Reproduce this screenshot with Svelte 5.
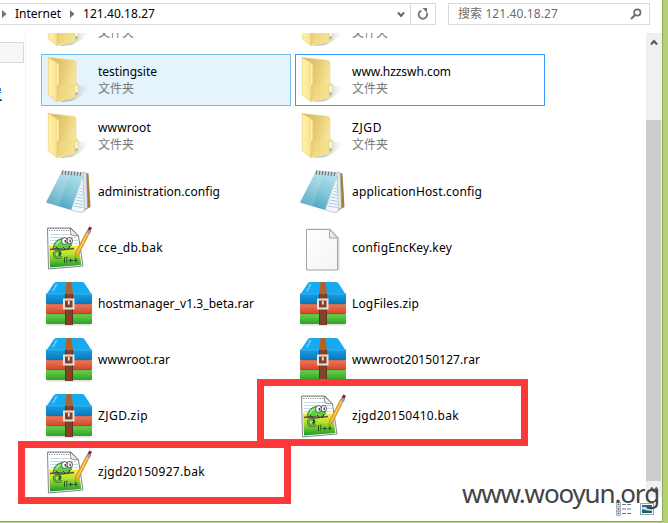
<script>
  const items = [
    { name: 'aspnet_client', icon: 'folder', w: 76 },
    { name: 'Test', icon: 'folder', w: 25 },
    { name: 'testingsite', icon: 'folder', w: 59, state: 'hover' },
    { name: 'www.hzzswh.com', icon: 'folder', w: 99, state: 'focus' },
    { name: 'wwwroot', icon: 'folder', w: 53 },
    { name: 'ZJGD', icon: 'folder', w: 30 },
    { name: 'administration.config', icon: 'note', w: 122 },
    { name: 'applicationHost.config', icon: 'note', w: 130 },
    { name: 'cce_db.bak', icon: 'bak', w: 65 },
    { name: 'configEncKey.key', icon: 'blank', w: 100 },
    { name: 'hostmanager_v1.3_beta.rar', icon: 'zip', w: 156 },
    { name: 'LogFiles.zip', icon: 'zip', w: 67 },
    { name: 'wwwroot.rar', icon: 'zip', w: 72 },
    { name: 'wwwroot20150127.rar', icon: 'zip', w: 128 },
    { name: 'ZJGD.zip', icon: 'zip', w: 50 },
    { name: 'zjgd20150410.bak', icon: 'bak', w: 107 },
    { name: 'zjgd20150927.bak', icon: 'bak', w: 107 }
  ];

  // Spreads or tightens the letters so that the label takes exactly w pixels.
  function fit(node, w) {
    const gap = (w - node.getBoundingClientRect().width) / node.textContent.length;
    node.style.letterSpacing = `${gap}px`;
  }
</script>

<svg class="defs" width="0" height="0" aria-hidden="true">
  <defs>
    <linearGradient id="fFront" x1="0" x2="1"><stop offset="0" stop-color="#fff2ac" /><stop offset=".6" stop-color="#fbe796" /><stop offset="1" stop-color="#eed47c" /></linearGradient>
    <linearGradient id="fBack" x1=".2" x2="1" y2=".3"><stop offset="0" stop-color="#d9bb62" /><stop offset=".5" stop-color="#e8cd77" /><stop offset="1" stop-color="#f8e89e" /></linearGradient>
    <linearGradient id="fShade" x1="0" x2="1"><stop offset="0" stop-color="#666" stop-opacity=".6" /><stop offset="1" stop-color="#999" stop-opacity="0" /></linearGradient>
    <linearGradient id="nCover" x1=".8" y1="0" x2=".2" y2="1"><stop offset="0" stop-color="#b2e2ed" /><stop offset=".5" stop-color="#7fc3d6" /><stop offset="1" stop-color="#3d9cbd" /></linearGradient>
    <linearGradient id="zBlue" y2="1" x2="0"><stop offset="0" stop-color="#1d9ce0" /><stop offset="1" stop-color="#0878bc" /></linearGradient>
    <linearGradient id="zRed" y2="1" x2="0"><stop offset="0" stop-color="#f47754" /><stop offset="1" stop-color="#d0452a" /></linearGradient>
    <linearGradient id="zGreen" y2="1" x2="0"><stop offset="0" stop-color="#6bd647" /><stop offset="1" stop-color="#2f9f27" /></linearGradient>
    <linearGradient id="bGrass" y2="1" x2="0"><stop offset="0" stop-color="#f4f03c" /><stop offset=".4" stop-color="#b4e32c" /><stop offset="1" stop-color="#149a2b" /></linearGradient>
    <linearGradient id="pPage" y2="1" x2="1"><stop offset="0" stop-color="#fff" /><stop offset="1" stop-color="#f4f4f4" /></linearGradient>
  </defs>
</svg>

<div class="desktop">
  <div class="window">
    <header>
      <div class="address">
        <svg class="sep" width="5" height="8" viewBox="0 0 5 8"><path d="M0 0L4.5 4L0 8Z" fill="#707070" /></svg>
        <span class="crumb first"><span use:fit={46}>Internet</span></span>
        <svg class="sep" width="5" height="8" viewBox="0 0 5 8"><path d="M0 0L4.5 4L0 8Z" fill="#707070" /></svg>
        <span class="crumb second"><span use:fit={72}>121.40.18.27</span></span>
        <div class="drop"><svg width="8" height="7" viewBox="0 0 8 7"><path d="M1 1.5L4 5L7 1.5" fill="none" stroke="#666" stroke-width="2" /></svg></div>
        <div class="reload">
          <svg width="12" height="12" viewBox="0 0 12 12"><path d="M4.4 2.6A4.2 4.2 0 1 0 9.8 5" fill="none" stroke="#787878" stroke-width="1.9" /><path d="M5.4 0L10 0V5Z" fill="#787878" /></svg>
        </div>
      </div>
      <div class="search">
        <span use:fit={100}>搜索 121.40.18.27</span>
        <svg width="12" height="12" viewBox="0 0 12 12"><circle cx="7.3" cy="4.5" r="3.2" fill="none" stroke="#6b6b6b" stroke-width="1.7" /><path d="M5 7L1 11" stroke="#6b6b6b" stroke-width="2" /></svg>
      </div>
    </header>

    <div class="body">
      <aside>
        <div class="selected"></div>
        <div class="link"><span>设置</span></div>
      </aside>
      <main>
        <div class="files">
          {#each items as item}
            <div class="item {item.state ?? ''}">
              <svg class="icon" width="48" height="48" viewBox="0 0 48 48">
                {#if item.icon === 'folder'}
                  <path d="M14 46L31 41L33 29L44 31Q41 38 27 45Z" fill="url(#fShade)" />
                  <path d="M3.5 1.5L28 4.3Q31 4.6 31 7V27L33 28V40L23 43.5L11 45Z" fill="url(#fBack)" stroke="#ead58c" stroke-width=".6" />
                  <path d="M14 30L31 27V41L23 43.5L13 45.5Z" fill="#f2da82" opacity=".55" />
                  <path d="M3.3 1.5L12 6.5Q13.8 7.5 13.8 10V28L12.3 31V46L3.3 38.5Z" fill="url(#fFront)" stroke="#e3c76e" stroke-width=".6" />
                  <path d="M12.8 8V28.5" stroke="#fff6c8" stroke-width="1.2" />
                  <path d="M29.5 28.5L33.3 27.5V39L29.5 41Z" fill="#ecd27a" />
                  <path d="M31.5 29.5V38.5" stroke="#fffef0" stroke-width="2" />
                  <path d="M31.5 36.5V38.5" stroke="#3d9ed8" stroke-width="1.6" />
                {:else if item.icon === 'note'}
                  <path d="M39 5L43.5 5.5L45.5 39L38 43Z" fill="#a57c38" />
                  <path d="M38 4L41.5 5L42.5 40L36 43.5Z" fill="#dfe8eb" stroke="#879da9" stroke-width=".7" />
                  <path d="M38 8L39.5 43.5L35 44.5L26 42Z" fill="#f4f8fa" stroke="#9db4bf" stroke-width=".6" />
                  <path d="M16 5L38 7L26 42L1 34.5Z" fill="url(#nCover)" />
                  <path d="M16 5L25 6L14 38L1 34.5Z" fill="#fff" opacity=".15" />
                  {#each [17, 20, 23, 26, 29, 32, 35, 38] as y}<path d="M{43 - y * 0.38} {y}L38.5 {y + 1.5}" stroke="#a3c5d4" stroke-width=".9" />{/each}
                  <path d="M17 2.5L40 4.5L39 7.8L15.5 5.8Z" fill="#d1d7d9" />
                  {#each [18, 21, 24, 27, 30, 33, 36] as x}<path d="M{x} {x / 12 + 1}L{x - 1} {x / 12 + 5}" stroke="#68777e" stroke-width="1.2" />{/each}
                {:else if item.icon === 'bak'}
                  <path d="M2.5 4H26L33.5 12L38 42L3.5 45Z" fill="#fff" stroke="#858585" stroke-width="1" />
                  <path d="M3 4.5H26M4 6.5H26" stroke="#888" stroke-width="1.2" stroke-dasharray="1.2 1.2" />
                  <path d="M5 10.5H30M5 13.5H32M5 16.5H33M5 19.5H33" stroke="#c2dcec" />
                  <path d="M4 21.5H34L36.3 41L5 43.5Z" fill="url(#bGrass)" />
                  <path d="M25 4L26 11L33.5 12Z" fill="#f2f2f2" stroke="#777" stroke-width=".8" />
                  <path d="M17 33Q9 36 9 29Q10 26 14 27.5Q17 30 13.5 31.5" fill="none" stroke="#2a5a28" stroke-width="2.3" />
                  <path d="M17 33Q9 36 9 29Q10 26 14 27.5" fill="none" stroke="#6fd15a" stroke-width="1.1" />
                  <path d="M8 25Q9 16 17 14.5Q25 15 26.5 21L23 25Q15 28 8 25Z" fill="#5fd043" stroke="#2c6327" stroke-width=".8" />
                  <path d="M11 21Q13 17 17 17" stroke="#a8ec83" stroke-width="1.5" fill="none" />
                  <path d="M5 25.5L12 24.5L20 25.5L29 24.5" stroke="#734559" stroke-width="1.4" fill="none" />
                  <path d="M11 23L14 26M18 23L21 26M25 22L23 26" stroke="#273920" stroke-width=".9" fill="none" />
                  <ellipse cx="19.5" cy="17" rx="2.9" ry="3.4" fill="#fff" stroke="#333" stroke-width=".8" />
                  <ellipse cx="24.8" cy="16.6" rx="2.7" ry="3.2" fill="#fff" stroke="#333" stroke-width=".8" />
                  <path d="M20.3 16V18.5M25.2 15.5V18" stroke="#222" stroke-width="1.2" />
                  <path d="M19.5 33V39M21.8 32.5V38.5M23.5 36.5H28M25.7 34.5V38.5M28.7 36.3H33M30.8 34V38.5" stroke="#1d4a20" stroke-width=".9" fill="none" />
                  <path d="M30.5 29L41.5 7.5L44.5 9L33.5 30.5L30 34Z" fill="#f3ac28" stroke="#a9752a" stroke-width=".6" />
                  <path d="M32.3 29.5L43 8.5" stroke="#ffdc72" stroke-width=".9" />
                  <path d="M42.6 5.5L44.3 2.5L47 3.8L45.5 7Z" fill="#8d2938" />
                  <path d="M41.8 6.8L45.5 8.5" stroke="#929baa" stroke-width="3" />
                {:else if item.icon === 'blank'}
                  <path d="M8 4.5H32L40.5 14V46H8Z" fill="#ccc" opacity=".7" />
                  <path d="M7.5 5.5H30.5L38.5 14V46H7.5Z" fill="url(#pPage)" stroke="#a4a4a4" />
                  <path d="M30.5 5.5V14H38.5Z" fill="#ededed" stroke="#a4a4a4" />
                {:else}
                  <path d="M2 43H46V46H2Z" fill="#888" opacity=".22" />
                  <path d="M9 3Q10 2 12 2H37Q39 2 40 4L47 15H1Z" fill="#18aaf0" />
                  <rect x="1" y="13.5" width="46" height="10.5" rx="1" fill="url(#zBlue)" />
                  <rect x="1" y="24" width="46" height="10" rx="1" fill="url(#zRed)" />
                  <rect x="1" y="34" width="46" height="10" rx="1" fill="url(#zGreen)" />
                  <path d="M1 24H47M1 34H47" stroke="#28617a" stroke-width=".6" opacity=".7" />
                  <path d="M1 14H47" stroke="#35b5f2" />
                  <path d="M11.5 4.5L9.5 8M9.5 8.5L8 11" stroke="#9be0fb" stroke-width="1.6" stroke-dasharray="1.4 .6" />
                  <path d="M21.5 2H26.5L28 14H20Z" fill="#ad6329" />
                  <rect x="20" y="14" width="8" height="31" fill="#80432a" />
                  <path d="M20.5 14V45M27.5 14V45" stroke="#65341f" />
                  <rect x="19" y="19.5" width="9.5" height="9" fill="#80432a" stroke="#ebe2dc" stroke-width="2" />
                  <path d="M23.8 21V24.5" stroke="#ebe2dc" stroke-width="1.8" />
                {/if}
              </svg>
              <div class="text">
                <div class="name"><span use:fit={item.w}>{item.name}</span></div>
                {#if item.icon === 'folder'}<div class="type">文件夹</div>{/if}
              </div>
            </div>
          {/each}
        </div>
      </main>
      <div class="scroll">
        <div class="arrow up"><svg width="8" height="7" viewBox="0 0 8 7"><path d="M1 5.5L4 2L7 5.5" fill="none" stroke="#555" stroke-width="2" /></svg></div>
        <div class="track"><div class="thumb"></div></div>
        <div class="arrow"><svg width="8" height="7" viewBox="0 0 8 7"><path d="M1 1.5L4 5L7 1.5" fill="none" stroke="#555" stroke-width="2" /></svg></div>
      </div>
    </div>

    <footer>
      <svg width="16" height="14" viewBox="0 0 16 14">
        {#each [0.5, 5, 9.5] as y, i}
          <rect x=".5" y={y} width="4" height="3.8" fill="#fff" stroke="#8ba6bd" stroke-width=".8" />
          <rect x="1.7" y={y + 1.1} width="1.7" height="1.7" fill={i === 1 ? '#c9302c' : '#38638f'} />
          <path d="M6 {y + 2}H10M11 {y + 2}H15" stroke="#66798e" />
        {/each}
      </svg>
      <svg width="14" height="12" viewBox="0 0 14 12"><rect x=".5" y=".5" width="13" height="11" fill="#fff" stroke="#8ba8c4" /><rect x="2" y="2" width="10" height="8" fill="#1f67ad" /><path d="M2 4Q7 3 12 7V8Q6 8 2 6Z" fill="#b9e1ef" /><path d="M2 7Q6 8 12 8V10H2Z" fill="#245f47" /></svg>
    </footer>
  </div>
  <div class="mark one"></div>
  <div class="mark two"></div>
  <div class="watermark"><span use:fit={197}>www.wooyun.org</span></div>
</div>

<style>
  :global(body) { margin: 0; overflow: hidden; }
  .defs { position: absolute; }
  .desktop { position: relative; box-sizing: border-box; width: 668px; height: 523px; overflow: hidden; background: #b4d174; font-family: "Noto Sans", "Open Sans", "Noto Sans CJK SC", sans-serif; font-size: 12px; color: #000; }
  .window { box-sizing: border-box; width: 663px; height: 522px; display: flex; flex-direction: column; background: #fff; border-right: 1px solid #91ac58; border-bottom: 1px solid #91ac58; }
  span { white-space: pre; }
  header { display: flex; flex: none; height: 33px; padding-top: 3px; box-sizing: border-box; gap: 12px; }
  .address, .search { box-sizing: border-box; height: 22px; border: 1px solid #d9d9d9; display: flex; align-items: center; }
  .address { width: 436px; border-left: 0; padding-left: 2px; line-height: 20px; }
  .sep { flex: none; }
  .crumb { flex: none; }
  .first { width: 63px; padding-left: 8px; box-sizing: border-box; }
  .second { padding-left: 8px; flex: 1; }
  .drop { width: 18px; display: flex; justify-content: center; }
  .reload { width: 24px; height: 20px; border-left: 1px solid #d9d9d9; display: flex; align-items: center; justify-content: center; }
  .search { width: 202px; padding: 0 7px 0 9px; justify-content: space-between; color: #6d6d6d; line-height: 20px; font-family: "Noto Sans", "Noto Sans CJK SC", sans-serif; }
  .body { display: flex; flex: none; height: 464px; }
  aside { box-sizing: border-box; width: 26px; border-right: 1px solid #f2f2f2; padding-top: 9px; overflow: hidden; }
  .selected { box-sizing: border-box; width: 24px; height: 21px; border: 1px solid #d9d9d9; border-left: 0; background: #f7f7f7; }
  .link { width: 2px; margin-top: 24px; height: 16px; display: flex; justify-content: flex-end; overflow: hidden; color: #003c9c; line-height: 15px; text-decoration: underline; }
  main { width: 620px; overflow: hidden; }
  .files { margin: -35px 0 0 15px; display: grid; grid-template-columns: 250px 250px; column-gap: 4px; grid-auto-rows: 52px; row-gap: 4px; }
  .item { box-sizing: border-box; border: 1px solid transparent; display: flex; align-items: center; padding-left: 3px; }
  .hover { background: #e5f3fb; border-color: #70c0e7; }
  .focus { border-color: #3399ff; }
  .icon { flex: none; }
  .text { margin-left: 5px; }
  .name { line-height: 16px; height: 16px; }
  .type { line-height: 15px; height: 16px; color: #787878; font-family: "Noto Sans CJK SC", sans-serif; }
  .scroll { width: 16px; background: #f0f0f0; display: flex; flex-direction: column; }
  .arrow { height: 16px; display: flex; align-items: center; justify-content: center; }
  .arrow.up { height: 18px; }
  .track { flex: 1; padding-top: 69px; display: flex; }
  .thumb { width: 15px; background: #cdcdcd; }
  footer { flex: 1; display: flex; justify-content: flex-end; align-items: center; gap: 8px; padding-right: 8px; }
  .mark { position: absolute; box-sizing: border-box; border: 7px solid #fc3939; }
  .one { left: 257px; top: 379px; width: 271px; height: 67px; }
  .two { left: 18px; top: 441px; width: 273px; height: 63px; }
  .watermark { position: absolute; left: 462px; top: 476px; font-size: 26px; line-height: 34px; color: #444; }
</style>
